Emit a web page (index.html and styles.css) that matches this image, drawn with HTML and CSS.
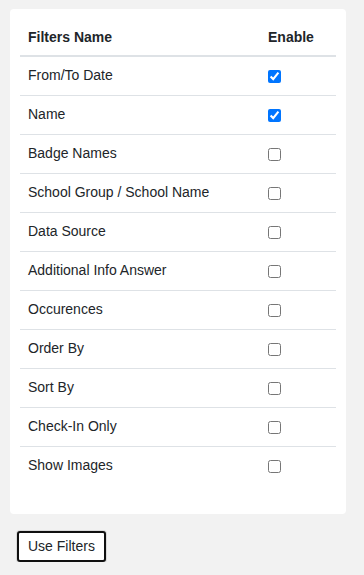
FILE: index.html
```html
<!DOCTYPE html>
<html lang="en">

<head>
    <meta charset="UTF-8">
    <meta name="viewport" content="width=device-width, initial-scale=1.0">
    <title>Filters</title>
    <link rel="stylesheet" href="styles.css">
</head>

<body>
    <div class="filter-card">
        <table class="filter-table">
            <thead>
                <tr>
                    <th>Filters Name</th>
                    <th class="col-enable">Enable</th>
                </tr>
            </thead>
            <tbody>
                <tr>
                    <td>From/To Date</td>
                    <td><input type="checkbox" checked></td>
                </tr>
                <tr>
                    <td>Name</td>
                    <td><input type="checkbox" checked></td>
                </tr>
                <tr>
                    <td>Badge Names</td>
                    <td><input type="checkbox"></td>
                </tr>
                <tr>
                    <td>School Group / School Name</td>
                    <td><input type="checkbox"></td>
                </tr>
                <tr>
                    <td>Data Source</td>
                    <td><input type="checkbox"></td>
                </tr>
                <tr>
                    <td>Additional Info Answer</td>
                    <td><input type="checkbox"></td>
                </tr>
                <tr>
                    <td>Occurences</td>
                    <td><input type="checkbox"></td>
                </tr>
                <tr>
                    <td>Order By</td>
                    <td><input type="checkbox"></td>
                </tr>
                <tr>
                    <td>Sort By</td>
                    <td><input type="checkbox"></td>
                </tr>
                <tr>
                    <td>Check-In Only</td>
                    <td><input type="checkbox"></td>
                </tr>
                <tr>
                    <td>Show Images</td>
                    <td><input type="checkbox"></td>
                </tr>
            </tbody>
        </table>
    </div>
    <div class="actions">
        <button class="btn-filters">Use Filters</button>
    </div>
</body>

</html>
```

FILE: styles.css
```css
body {
    margin: 0;
    padding: 9px 0 0 10px;
    background-color: #F2F2F2;
    font-family: 'Liberation Sans', Arial, sans-serif;
    font-size: 14px;
    color: #212529;
}

.filter-card {
    width: 316px;
    padding: 10px;
    background-color: #fff;
    border-radius: 4px;
}

.filter-table {
    width: 100%;
    border-collapse: collapse;
    margin-bottom: 19px;
}

.filter-table th,
.filter-table td {
    text-align: left;
    line-height: 21px;
    padding: 8px 8px 9px;
}

.filter-table th {
    font-weight: 700;
    padding: 8px 8px 7px;
    border-bottom: 2px solid #DEE2E6;
}

.filter-table tbody tr+tr td {
    border-top: 1px solid #DEE2E6;
}

.col-enable {
    width: 60px;
}

.filter-table input[type="checkbox"] {
    margin: 0;
    width: 13px;
    height: 13px;
    vertical-align: middle;
}

.actions {
    padding: 17px 0 0 7px;
}

.btn-filters {
    font-family: 'Liberation Sans', Arial, sans-serif;
    font-size: 14px;
    line-height: 17px;
    color: #212529;
    background-color: #fff;
    padding: 5px 9px;
    border: 2px solid #101010;
    border-radius: 3px;
    box-shadow: 0 0 0 1px #DADADA;
    cursor: pointer;
}
```
